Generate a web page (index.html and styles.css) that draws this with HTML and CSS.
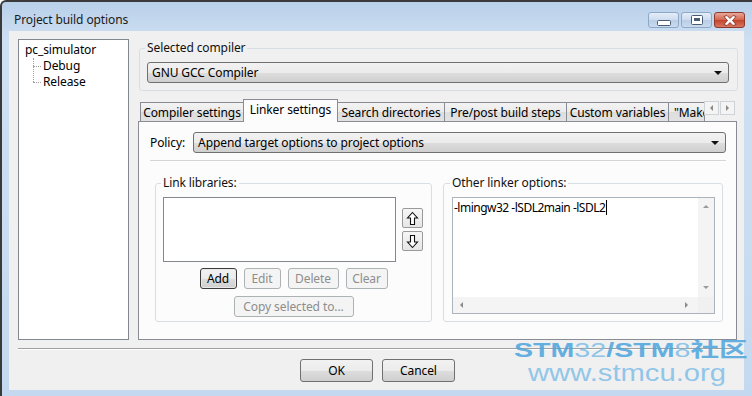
FILE: index.html
```html
<!DOCTYPE html>
<html lang="en">
<head>
    <meta charset="UTF-8">
    <title>Project build options</title>
    <link rel="stylesheet" href="styles.css">
</head>
<body>
    <div class="window">
        <div class="titlebar">
            <span class="title">Project build options</span>
            <div class="caption-buttons">
                <div class="cap-btn">
                    <svg width="14" height="6" viewBox="0 0 14 6"><rect x="0.5" y="0.5" width="13" height="5" rx="1" fill="#fff" stroke="#4a5c74"/></svg>
                </div>
                <div class="cap-btn">
                    <svg width="12" height="10" viewBox="0 0 12 10"><rect x="0.5" y="0.5" width="11" height="9" rx="1" fill="#fff" stroke="#4a5c74"/><rect x="3" y="3" width="6" height="3" fill="#4a5c74"/></svg>
                </div>
                <div class="cap-btn close">
                    <svg width="14" height="11" viewBox="0 0 14 11"><path d="M1 1.5 L4 0.5 L7 3.5 L10 0.5 L13 1.5 L9.5 5.5 L13 9.5 L10 10.5 L7 7.5 L4 10.5 L1 9.5 L4.5 5.5 Z" fill="#fff" stroke="#7a2a1c" stroke-width="0.8"/></svg>
                </div>
            </div>
        </div>

        <div class="client">
            <div class="main">
                <div class="tree">
                    <div class="tree-root">pc_simulator</div>
                    <div class="tree-children">
                        <div class="tree-item">Debug</div>
                        <div class="tree-item">Release</div>
                    </div>
                </div>

                <div class="options">
                    <fieldset class="group compiler-group">
                        <legend>Selected compiler</legend>
                        <div class="combo">
                            <span>GNU GCC Compiler</span>
                            <span class="combo-arrow"></span>
                        </div>
                    </fieldset>

                    <div class="notebook">
                        <div class="tabs">
                            <div class="tab tab-compiler">Compiler settings</div>
                            <div class="tab tab-linker active">Linker settings</div>
                            <div class="tab tab-search">Search directories</div>
                            <div class="tab tab-steps">Pre/post build steps</div>
                            <div class="tab tab-vars">Custom variables</div>
                            <div class="tab tab-make">"Make" commands</div>
                            <div class="tab-scroll">
                                <div class="scroll-btn"><span class="tri-left"></span></div>
                                <div class="scroll-btn"><span class="tri-right"></span></div>
                            </div>
                        </div>

                        <div class="page">
                            <div class="policy-row">
                                <span class="label">Policy:</span>
                                <div class="combo">
                                    <span>Append target options to project options</span>
                                    <span class="combo-arrow"></span>
                                </div>
                            </div>
                            <div class="etched"></div>

                            <div class="groups">
                                <fieldset class="group libs-group">
                                    <legend>Link libraries:</legend>
                                    <div class="list-row">
                                        <div class="listbox"></div>
                                        <div class="updown">
                                            <div class="small-btn">
                                                <svg width="13" height="15" viewBox="0 0 13 15"><path d="M6.5 1.5 L11.5 7 H8.5 V13.5 H4.5 V7 H1.5 Z" fill="#fff" stroke="#111" stroke-width="1.1"/></svg>
                                            </div>
                                            <div class="small-btn">
                                                <svg width="13" height="15" viewBox="0 0 13 15"><path d="M6.5 13.5 L11.5 8 H8.5 V1.5 H4.5 V8 H1.5 Z" fill="#fff" stroke="#111" stroke-width="1.1"/></svg>
                                            </div>
                                        </div>
                                    </div>
                                    <div class="btn-row">
                                        <div class="btn default btn-add">Add</div>
                                        <div class="btn disabled btn-edit">Edit</div>
                                        <div class="btn disabled btn-delete">Delete</div>
                                        <div class="btn disabled btn-clear">Clear</div>
                                    </div>
                                    <div class="btn-row">
                                        <div class="btn disabled btn-copy">Copy selected to...</div>
                                    </div>
                                </fieldset>

                                <fieldset class="group other-group">
                                    <legend>Other linker options:</legend>
                                    <div class="textarea">
                                        <div class="text-area-body">
                                            <div class="text-content">-lmingw32 -lSDL2main -lSDL2<span class="caret"></span></div>
                                            <div class="vscroll">
                                                <span class="tri-up"></span>
                                                <span class="tri-down"></span>
                                            </div>
                                        </div>
                                        <div class="hscroll-row">
                                            <div class="hscroll">
                                                <span class="tri-left"></span>
                                                <span class="tri-right"></span>
                                            </div>
                                            <div class="corner"></div>
                                        </div>
                                    </div>
                                </fieldset>
                            </div>
                        </div>
                    </div>
                </div>
            </div>

            <div class="bottom-line"></div>

            <div class="footer">
                <div class="btn dialog-btn">OK</div>
                <div class="btn dialog-btn">Cancel</div>
            </div>
        </div>

        <!-- watermark from the forum screenshot -->
        <div class="watermark">
            <div class="wm-line1"><b>STM</b>32<b>/STM</b>8<b>社区</b></div>
            <div class="wm-line2">www.stmcu.org</div>
        </div>
    </div>
</body>
</html>
```

FILE: styles.css
```css
* {
    box-sizing: border-box;
}

body {
    margin: 0;
    font-family: "Noto Sans", sans-serif;
    font-size: 12px;
    letter-spacing: -0.1px;
    color: #000;
    background: #fff;
}

.window {
    position: relative;
    width: 752px;
    height: 396px;
    border-top: 2px solid #3a3a3a;
    border-left: 2px solid #3a3a3a;
    border-top-left-radius: 6px;
    background: linear-gradient(#b9d0ea, #cfe0f2 40px, #c4d9ef);
    overflow: hidden;
}

.titlebar {
    height: 29px;
    display: flex;
    align-items: center;
    padding-left: 12px;
}

.title {
    flex: 1;
    font-size: 12px;
    color: #1a1a1a;
    padding-top: 5px;
}

.caption-buttons {
    display: flex;
    gap: 2px;
    margin-right: 7px;
    align-self: flex-start;
    margin-top: 10px;
}

.cap-btn {
    width: 31px;
    height: 16px;
    border: 1px solid #8ea8c8;
    border-radius: 3px;
    background: linear-gradient(#e4edf8, #cddcef 50%, #b9cde6 51%, #c9dbef);
    display: flex;
    align-items: center;
    justify-content: center;
}

.cap-btn:first-child svg {
    margin-top: 5px;
}

.cap-btn.close {
    border-color: #8d3a2c;
    background: linear-gradient(#e9a89a, #d2644e 50%, #c2432c 51%, #d8765f);
}

.client {
    margin: 0 8px 0 7px;
    height: 359px;
    background: #f0f0f0;
    padding: 8px 7px 0 9px;
}

.main {
    display: flex;
    gap: 9px;
    height: 301px;
}

.tree {
    flex: 0 0 111px;
    background: #fff;
    border: 1px solid #828790;
    padding: 2px 0 0 6px;
    line-height: 16px;
}

.tree-children {
    margin-left: 8px;
    border-left: 1px dotted #a0a0a0;
    height: 24px;
}

.tree-item {
    position: relative;
    padding-left: 10px;
    margin-left: -1px;
}

.tree-item::before {
    content: "";
    position: absolute;
    left: 0;
    top: 8px;
    width: 8px;
    border-top: 1px dotted #a0a0a0;
}

.options {
    flex: 1;
    min-width: 0;
    display: flex;
    flex-direction: column;
}

.group {
    margin: 0;
    border: 1px solid #d5dfe5;
    border-radius: 3px;
    min-width: 0;
}

.group legend {
    padding: 0 2px;
    margin-left: -2px;
    line-height: 14px;
    color: #111;
}

.compiler-group {
    margin: 2px -1px 0 1px;
    padding: 7px 8px 7px 7px;
}

.combo {
    height: 21px;
    border: 1px solid #707070;
    border-radius: 3px;
    background: linear-gradient(#f2f2f2, #ebebeb 50%, #dddddd 51%, #cfcfcf);
    display: flex;
    align-items: center;
    padding: 0 6px 0 4px;
}

.combo span:first-child {
    flex: 1;
}

.combo-arrow {
    width: 0;
    height: 0;
    border-left: 4px solid transparent;
    border-right: 4px solid transparent;
    border-top: 4px solid #111;
    margin-top: 1px;
}

.notebook {
    margin-top: 8px;
    flex: 1;
    display: flex;
    flex-direction: column;
}

.tabs {
    display: flex;
    align-items: flex-end;
    height: 22px;
    padding-left: 2px;
    position: relative;
    z-index: 1;
}

.tab {
    flex: none;
    height: 19px;
    border: 1px solid #898c95;
    border-bottom: none;
    margin-right: -1px;
    padding-top: 1px;
    line-height: 17px;
    text-align: center;
    white-space: nowrap;
    overflow: hidden;
    background: linear-gradient(#f3f3f3, #ebebeb 50%, #dddddd 51%, #e2e2e2);
}

.tab.active {
    height: 23px;
    margin-bottom: -1px;
    padding-top: 0;
    background: #fcfcfc;
    line-height: 19px;
    position: relative;
    z-index: 2;
}

.tab-compiler { width: 104px; }
.tab-linker { width: 95px; }
.tab-search { width: 108px; }
.tab-steps { width: 123px; }
.tab-vars { width: 103px; }

.tab-make {
    width: 37px;
    text-align: left;
    padding-left: 5px;
}

.tab-scroll {
    display: flex;
    gap: 1px;
    align-self: flex-start;
    margin-top: 2px;
    position: relative;
    z-index: 3;
    background: #f0f0f0;
}

.scroll-btn {
    width: 15px;
    height: 14px;
    border: 1px solid #cfd3d8;
    background: #f4f4f4;
    display: flex;
    align-items: center;
    justify-content: center;
}

.tri-left,
.tri-right,
.tri-up,
.tri-down {
    width: 0;
    height: 0;
    display: block;
}

.tri-left {
    border-top: 3px solid transparent;
    border-bottom: 3px solid transparent;
    border-right: 3px solid #8a8a8a;
}

.tri-right {
    border-top: 3px solid transparent;
    border-bottom: 3px solid transparent;
    border-left: 3px solid #8a8a8a;
}

.tri-up {
    border-left: 3px solid transparent;
    border-right: 3px solid transparent;
    border-bottom: 3px solid #9a9a9a;
}

.tri-down {
    border-left: 3px solid transparent;
    border-right: 3px solid transparent;
    border-top: 3px solid #9a9a9a;
}

.page {
    flex: 1;
    border: 1px solid #898c95;
    background: #fcfcfc;
    padding: 10px 10px 0 11px;
}

.policy-row {
    display: flex;
    align-items: center;
    gap: 8px;
}

.policy-row .combo {
    flex: 1;
}

.etched {
    margin-top: 7px;
    border-top: 1px solid #d5d5d5;
    border-bottom: 1px solid #fff;
}

.groups {
    display: flex;
    gap: 11px;
    margin: 14px 3px 0 5px;
}

.libs-group {
    flex: 0 0 277px;
    padding: 7px 7px 4px 7px;
}

.other-group {
    flex: 1;
    padding: 7px 7px 7px 8px;
}

.list-row {
    display: flex;
    align-items: center;
    gap: 6px;
}

.listbox {
    width: 233px;
    height: 65px;
    background: #fff;
    border: 1px solid #828790;
}

.updown {
    display: flex;
    flex-direction: column;
    gap: 3px;
}

.small-btn {
    width: 21px;
    height: 20px;
    border: 1px solid #9a9a9a;
    border-radius: 2px;
    background: linear-gradient(#f6f6f6, #e6e6e6);
    display: flex;
    align-items: center;
    justify-content: center;
}

.btn-row {
    display: flex;
    justify-content: center;
    gap: 7px;
    margin-top: 6px;
}

.btn-row + .btn-row {
    margin-top: 7px;
}

.btn {
    height: 21px;
    border: 1px solid #707070;
    border-radius: 3px;
    background: linear-gradient(#f2f2f2, #ebebeb 50%, #dddddd 51%, #cfcfcf);
    display: flex;
    align-items: center;
    justify-content: center;
}

.btn.default {
    border-color: #3c3c3c;
    box-shadow: inset 0 0 0 1px #e8e8e8;
}

.btn.disabled {
    border-color: #adb2b5;
    background: #f4f4f4;
    color: #8d8d8d;
}

.btn-add { width: 37px; }
.btn-edit { width: 37px; }
.btn-delete { width: 51px; }
.btn-clear { width: 42px; }
.btn-copy { width: 120px; }

.textarea {
    height: 117px;
    border: 1px solid #a9b4bf;
    background: #fff;
    display: flex;
    flex-direction: column;
}

.text-area-body {
    flex: 1;
    display: flex;
}

.text-content {
    flex: 1;
    padding: 2px 0 0 1px;
    line-height: 16px;
    letter-spacing: -0.5px;
    white-space: nowrap;
}

.caret {
    display: inline-block;
    width: 1px;
    height: 15px;
    margin-left: 1px;
    background: #000;
    vertical-align: -3px;
}

.vscroll {
    width: 16px;
    background: #f4f4f4;
    display: flex;
    flex-direction: column;
    justify-content: space-between;
    align-items: center;
    padding: 7px 0 8px;
}

.hscroll-row {
    display: flex;
    height: 16px;
}

.hscroll {
    flex: 1;
    background: #f4f4f4;
    display: flex;
    justify-content: space-between;
    align-items: center;
    padding: 0 10px 0 7px;
}

.corner {
    width: 16px;
    background: #f0f0f0;
}

.bottom-line {
    margin: 8px 2px 0 0;
    border-top: 1px solid #a0a0a0;
    border-bottom: 1px solid #fff;
}

.footer {
    display: flex;
    justify-content: center;
    gap: 9px;
    margin-top: 9px;
}

.dialog-btn {
    width: 73px;
    height: 23px;
}

.watermark {
    position: absolute;
    left: 512px;
    top: 338px;
    font-family: "Liberation Sans", "Noto Sans CJK SC", sans-serif;
    letter-spacing: 0;
    opacity: 0.85;
    pointer-events: none;
}

.wm-line1 {
    font-size: 20px;
    line-height: 20px;
    color: #7fbde7;
    transform: scaleX(1.43);
    transform-origin: left;
    white-space: nowrap;
}

.wm-line1 b {
    color: #4ba4de;
}

.wm-line2 {
    margin-left: 14px;
    font-size: 23px;
    line-height: 26px;
    color: #82bfe8;
    transform: scaleX(1.27);
    transform-origin: left;
    white-space: nowrap;
}
```
